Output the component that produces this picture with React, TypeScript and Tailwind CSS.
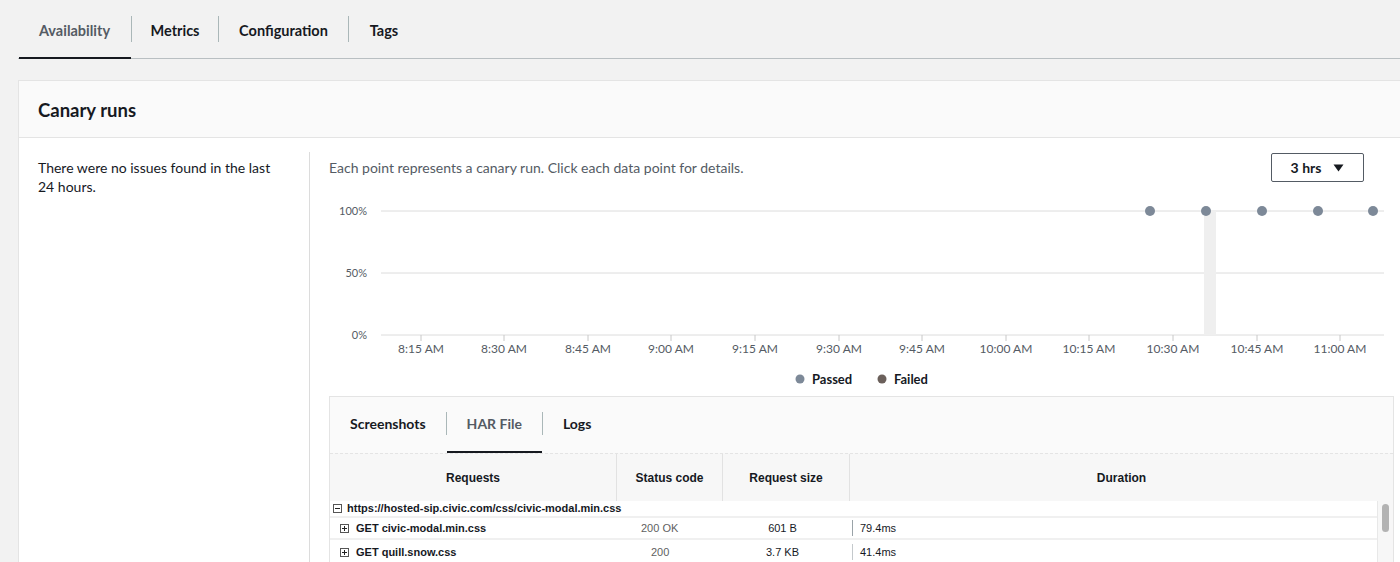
const ticks = [
  { x: 92, label: "8:15 AM" },
  { x: 175, label: "8:30 AM" },
  { x: 259, label: "8:45 AM" },
  { x: 342, label: "9:00 AM" },
  { x: 426, label: "9:15 AM" },
  { x: 510, label: "9:30 AM" },
  { x: 593, label: "9:45 AM" },
  { x: 677, label: "10:00 AM" },
  { x: 760, label: "10:15 AM" },
  { x: 844, label: "10:30 AM" },
  { x: 928, label: "10:45 AM" },
  { x: 1011, label: "11:00 AM" },
];

const points = [821, 877, 933, 989, 1044];

function BoxIcon({ open }: { open: boolean }) {
  return (
    <svg width="9" height="9" viewBox="0 0 9 9" className="shrink-0">
      <rect x="0.5" y="0.5" width="8" height="8" fill="#fff" stroke="#555" />
      <line x1="2" y1="4.5" x2="7" y2="4.5" stroke="#222" />
      {!open && <line x1="4.5" y1="2" x2="4.5" y2="7" stroke="#222" />}
    </svg>
  );
}

function Chart() {
  return (
    <svg width="1065" height="214" className="block">
      {[29, 91, 153].map((y) => (
        <line key={y} x1="52" y1={y} x2="1055" y2={y} stroke="#dcdcdc" />
      ))}
      <rect x="875" y="29" width="12" height="124" fill="#efefef" />
      {[
        { y: 29, t: "100%" },
        { y: 91, t: "50%" },
        { y: 153, t: "0%" },
      ].map((l) => (
        <text key={l.t} x="38" y={l.y + 4} textAnchor="end" fontSize="11" fill="#545b64" fontFamily="Lato, sans-serif">
          {l.t}
        </text>
      ))}
      {ticks.map((t) => (
        <g key={t.label}>
          <line x1={t.x} y1="153" x2={t.x} y2="159" stroke="#c8c8c8" />
          <text x={t.x} y="171" textAnchor="middle" fontSize="12" fill="#545b64" fontFamily="Lato, sans-serif">
            {t.label}
          </text>
        </g>
      ))}
      {points.map((x) => (
        <circle key={x} cx={x} cy="29" r="5" fill="#7d8998" />
      ))}
      <circle cx="471" cy="197" r="4.5" fill="#7d8998" />
      <text x="483" y="201.5" fontSize="13" fontWeight="700" fill="#16191f" fontFamily="Lato, sans-serif">
        Passed
      </text>
      <circle cx="553" cy="197" r="4.5" fill="#6b605b" />
      <text x="565" y="201.5" fontSize="13" fontWeight="700" fill="#16191f" fontFamily="Lato, sans-serif">
        Failed
      </text>
    </svg>
  );
}

function HarTable() {
  return (
    <div className="font-['Liberation_Sans',Arial,sans-serif] text-[#16191f]">
      <div className="flex h-[48px] bg-[#f7f7f7] border-t border-dashed border-[#e4e4e4] text-[12px] font-bold">
        <div className="w-[287px] flex items-center justify-center border-r border-[#e2e2e2]">Requests</div>
        <div className="w-[106px] flex items-center justify-center border-r border-[#e2e2e2]">Status code</div>
        <div className="w-[127px] flex items-center justify-center border-r border-[#e2e2e2]">Request size</div>
        <div className="flex-1 flex items-center justify-center">Duration</div>
      </div>
      <div className="flex">
        <div className="w-[1047px] bg-white text-[11px]">
          <div className="h-[17px] flex items-center gap-[5px] pl-[3px] font-bold border-b-2 border-[#f0f0f0]">
            <BoxIcon open />
            https://hosted-sip.civic.com/css/civic-modal.min.css
          </div>
          <div className="h-[22px] flex items-center border-b-2 border-[#f0f0f0]">
            <div className="w-[287px] flex items-center gap-[7px] pl-[10px] font-bold">
              <BoxIcon open={false} />
              GET civic-modal.min.css
            </div>
            <div className="w-[106px] pl-[24px] text-[#5f5f5f]">200 OK</div>
            <div className="w-[127px] text-center pr-[8px]">601 B</div>
            <div className="flex items-center gap-[7px] pl-[2px]">
              <span className="w-px h-[16px] bg-[#9aa3a8]" />
              79.4ms
            </div>
          </div>
          <div className="h-[24px] flex items-center">
            <div className="w-[287px] flex items-center gap-[7px] pl-[10px] font-bold">
              <BoxIcon open={false} />
              GET quill.snow.css
            </div>
            <div className="w-[106px] pl-[34px] text-[#5f5f5f]">200</div>
            <div className="w-[127px] text-center pr-[8px]">3.7 KB</div>
            <div className="flex items-center gap-[7px] pl-[2px]">
              <span className="w-px h-[16px] bg-[#c4c9cc]" />
              41.4ms
            </div>
          </div>
        </div>
        <div className="flex-1 bg-[#f7f7f7] border-l border-[#e8e8e8] pt-[3px] flex justify-center">
          <div className="w-[7px] h-[28px] rounded-full bg-[#b3b3b3]" />
        </div>
      </div>
    </div>
  );
}

export default function App() {
  return (
    <div className="w-[1400px] h-[562px] overflow-hidden bg-[#f2f2f2] font-['Lato',sans-serif] text-[#16191f]">
      <div className="pl-[18px] w-[1440px]">
        <div className="flex h-[59px] border-b border-[#b9bfc2] text-[14.5px] font-bold">
          <div className="relative w-[113px] flex items-center justify-center pt-[3px]">
            <span className="text-[#545b64]">Availability</span>
            <span className="absolute left-[1px] right-0 -bottom-[1px] h-[2px] bg-[#16191f]" />
          </div>
          <div className="my-[16px] w-px bg-[#aab7b8]" />
          <div className="w-[86px] flex items-center justify-center pt-[3px]">Metrics</div>
          <div className="my-[16px] w-px bg-[#aab7b8]" />
          <div className="w-[129px] flex items-center justify-center pt-[3px]">Configuration</div>
          <div className="my-[16px] w-px bg-[#aab7b8]" />
          <div className="w-[70px] flex items-center justify-center pt-[3px]">Tags</div>
        </div>

        <div className="mt-[21px] bg-white border border-[#e4e4e4]">
          <div className="h-[57px] bg-[#fafafa] border-b border-[#e4e4e4] flex items-center px-[19px] pt-[4px]">
            <h2 className="text-[18.5px] font-bold">Canary runs</h2>
          </div>
          <div className="flex pt-[14px] h-[450px]">
            <div className="w-[290px] pl-[19px] pr-[20px] pt-[6px] text-[14px] leading-[19px]">
              There were no issues found in the last 24 hours.
            </div>
            <div className="border-l border-[#dcdcdc] pl-[19px]">
              <div className="flex justify-between w-[1065px] pr-[30px]">
                <p className="pt-[5px] text-[14px] text-[#545b64]">
                  Each point represents a canary run. Click each data point for details.
                </p>
                <button className="mt-[1px] w-[93px] h-[29px] border border-[#545b64] rounded-[2px] flex items-center justify-center gap-[12px] text-[14px] font-bold">
                  3 hrs
                  <svg width="11" height="8" viewBox="0 0 11 8">
                    <path d="M0.5 0.5 H10.5 L5.5 7.5 Z" fill="#16191f" />
                  </svg>
                </button>
              </div>
              <Chart />
              <div className="w-[1065px] border border-[#e4e4e4] bg-[#fafafa]">
                <div className="flex h-[56px] pb-[3px] text-[14px] font-bold">
                  <div className="flex items-center px-[20px]">Screenshots</div>
                  <div className="my-[15px] w-px bg-[#aab7b8]" />
                  <div className="relative flex items-center px-[20px] text-[#545b64]">
                    HAR File
                    <span className="absolute left-0 right-0 -bottom-[3px] h-[2px] bg-[#16191f]" />
                  </div>
                  <div className="my-[15px] w-px bg-[#aab7b8]" />
                  <div className="flex items-center px-[20px]">Logs</div>
                </div>
                <HarTable />
              </div>
            </div>
          </div>
        </div>
      </div>
    </div>
  );
}
